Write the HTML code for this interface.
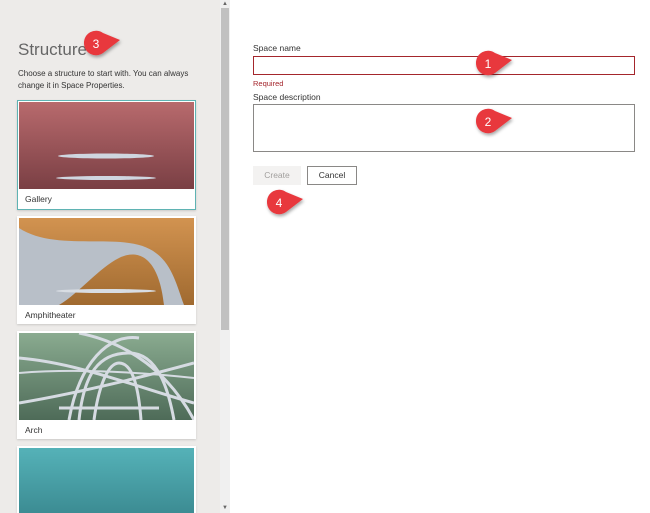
<!DOCTYPE html>
<html style="overflow:hidden"><head><style>
*{margin:0;padding:0;box-sizing:border-box}
html,body{width:650px;height:513px;overflow:hidden}
body{background:#fff;font-family:"Liberation Sans",sans-serif;position:relative}
.a{position:absolute}
.left{left:0;top:0;width:220px;height:513px;background:#edebe9}
.sb{left:220px;top:0;width:10px;height:513px;background:#f0f0f0}
.thumb{left:221px;top:8px;width:8px;height:322px;background:#c1c1c1}
.card{position:absolute;left:17px;width:179px;background:#fff;box-shadow:0 1px 2px rgba(0,0,0,.15);overflow:hidden}
.img{position:absolute;left:2px;top:2px;width:175px;height:87px;overflow:hidden}
.lbl{position:absolute;left:8px;top:94px;font-size:8.5px;color:#333}
label{position:absolute;font-size:8.5px;color:#333}
</style></head><body>
<div class="a left"></div>
<div class="a sb"></div>
<div class="a thumb"></div>
<div class="a" style="left:222px;top:1px;font-size:6px;color:#666">▲</div>
<div class="a" style="left:222px;top:505px;font-size:6px;color:#666">▼</div>
<div class="a" style="left:18px;top:40px;font-size:17px;color:#666;font-weight:300">Structure</div>
<div class="a" style="left:18px;top:68px;font-size:8px;color:#333;line-height:12px;width:180px">Choose a structure to start with. You can always change it in Space Properties.</div>

<div class="card" style="top:100px;height:110px;border:1px solid #5fb3b3">
<div class="img" style="left:1px;top:1px;background:linear-gradient(#b86a6d,#7a3f44)">
<svg width="175" height="87"><ellipse cx="87" cy="54" rx="48" ry="2.5" fill="#cfd6e0"/><ellipse cx="87" cy="76" rx="50" ry="2" fill="#cfd6e0"/></svg></div>
<div class="lbl" style="top:93px;left:7px">Gallery</div></div>

<div class="card" style="top:216px;height:108px">
<div class="img" style="background:linear-gradient(#d29350,#a06a30)">
<svg width="175" height="87"><path d="M0 10 C30 30 80 20 110 25 C150 30 155 60 165 87 L145 87 C140 40 120 30 100 40 C80 50 60 75 40 87 L0 87Z" fill="#b8bfc8"/><ellipse cx="87" cy="73" rx="50" ry="2" fill="#d8dde3"/></svg></div>
<div class="lbl">Amphitheater</div></div>

<div class="card" style="top:331px;height:108px">
<div class="img" style="background:linear-gradient(#8aab90,#4e6b58)">
<svg width="175" height="87" fill="none" stroke="#d6dbe2" stroke-width="3"><path d="M0 25 C60 30 120 55 175 70"/><path d="M0 70 C60 60 120 45 175 30"/><path d="M60 87 C65 40 80 20 110 20 C140 20 150 60 155 87"/><path d="M75 87 C80 50 90 30 100 30 C115 30 120 60 122 87"/><path d="M50 87 C60 30 90 0 120 5"/><path d="M175 87 C150 40 110 10 60 0"/><path d="M0 40 C60 35 130 40 175 45" stroke-width="2"/><path d="M40 75 L140 75"/></svg></div>
<div class="lbl">Arch</div></div>

<div class="card" style="top:446px;height:67px">
<div class="img" style="height:70px;background:linear-gradient(#55b2b8,#3a8990)"></div></div>

<label style="left:253px;top:43px">Space name</label>
<div class="a" style="left:253px;top:56px;width:382px;height:19px;border:1px solid #a4262c"></div>
<div class="a" style="left:253px;top:79px;font-size:7.5px;color:#a4262c">Required</div>
<label style="left:253px;top:92px">Space description</label>
<div class="a" style="left:253px;top:104px;width:382px;height:48px;border:1px solid #8a8886"></div>
<div class="a" style="left:253px;top:166px;width:48px;height:19px;background:#f3f2f1;color:#a19f9d;font-size:8.5px;text-align:center;line-height:19px">Create</div>
<div class="a" style="left:307px;top:166px;width:50px;height:19px;border:1px solid #8a8886;color:#333;font-size:8.5px;text-align:center;line-height:17px">Cancel</div>

<svg class="a" style="left:0;top:0" width="650" height="513">
<defs><filter id="s"><feDropShadow dx="1" dy="2" stdDeviation="1.5" flood-opacity=".35"/></filter></defs>
<g fill="#e8373d" filter="url(#s)">
<path d="M84 43 a12 12 0 0 1 19-10 L120 40 L103 53 a12 12 0 0 1 -19 -10Z"/>
<path d="M476 63 a12 12 0 0 1 19-10 L512 60 L495 73 a12 12 0 0 1 -19 -10Z"/>
<path d="M476 121 a12 12 0 0 1 19-10 L512 118 L495 131 a12 12 0 0 1 -19 -10Z"/>
<path d="M267 202 a12 12 0 0 1 19-10 L303 199 L286 212 a12 12 0 0 1 -19 -10Z"/>
</g>
<g fill="#fff" font-family="Liberation Sans" font-size="12" text-anchor="middle">
<text x="96" y="48">3</text><text x="488" y="68">1</text><text x="488" y="126">2</text><text x="279" y="207">4</text>
</g></svg>
</body></html>
